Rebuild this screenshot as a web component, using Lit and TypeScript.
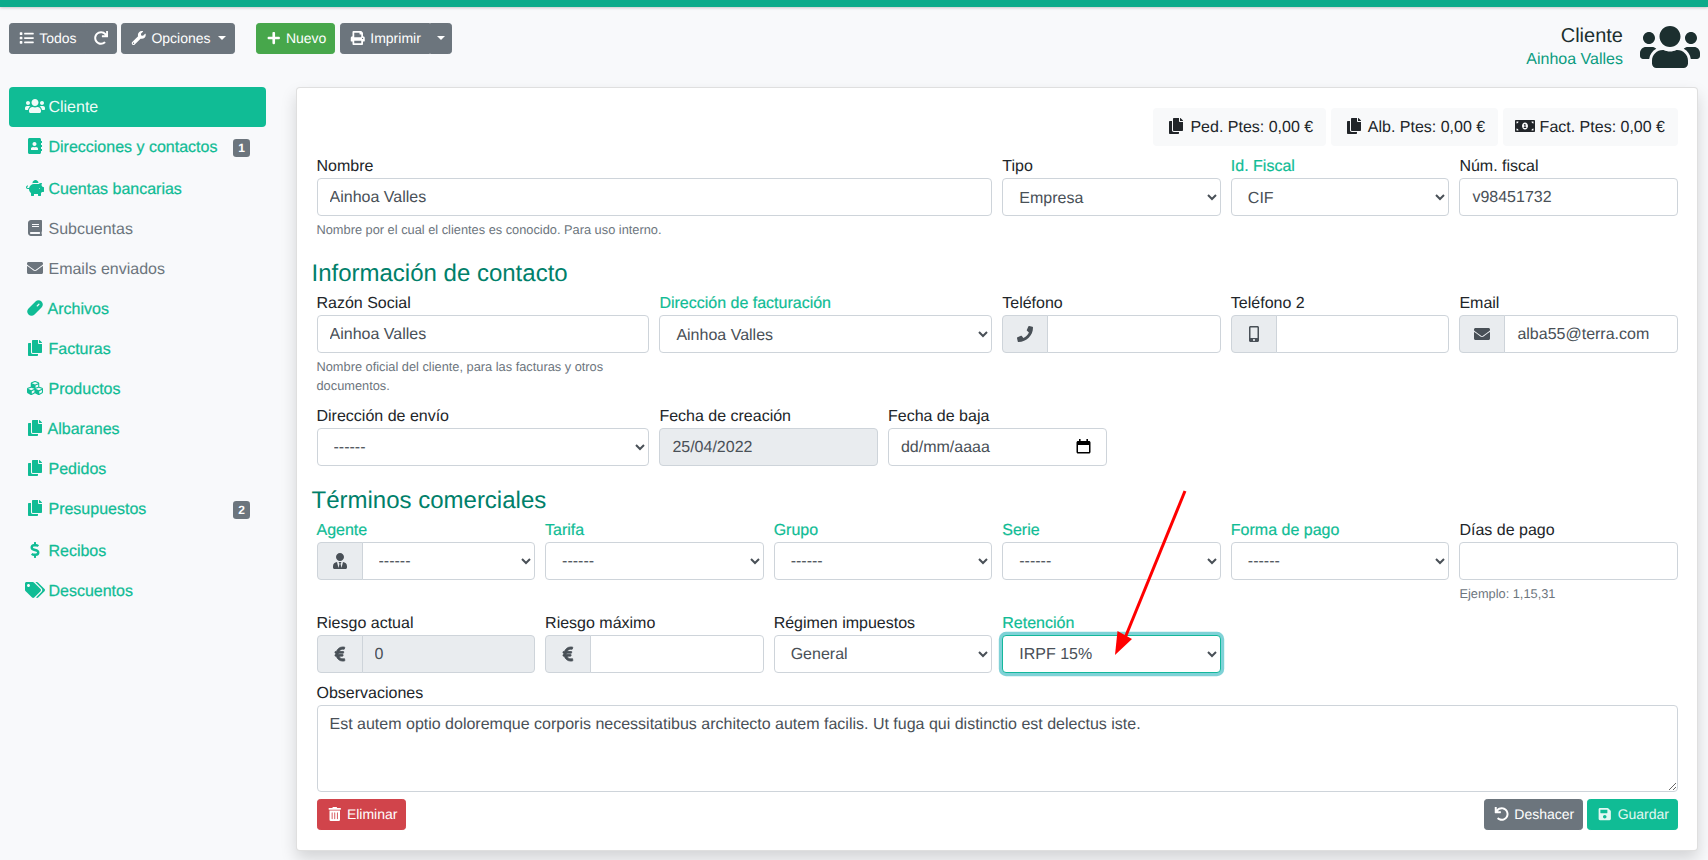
import { LitElement, html, css } from "lit";
import { customElement } from "lit/decorators.js";

// font awesome 5 solid shapes: [viewBox width, path]
const ICONS: Record<string, [number, string]> = {
  users: [640, "M96 224c35.3 0 64-28.7 64-64s-28.7-64-64-64-64 28.7-64 64 28.7 64 64 64zm448 0c35.3 0 64-28.7 64-64s-28.7-64-64-64-64 28.7-64 64 28.7 64 64 64zm32 32h-64c-17.6 0-33.5 7.1-45.1 18.6 40.3 22.1 68.9 62 75.1 109.4h66c17.7 0 32-14.3 32-32v-32c0-35.3-28.7-64-64-64zm-256 0c61.9 0 112-50.1 112-112S381.9 32 320 32 208 82.1 208 144s50.1 112 112 112zm76.8 32h-8.3c-20.8 10-43.9 16-68.5 16s-47.6-6-68.5-16h-8.3C179.6 288 128 339.6 128 403.2V432c0 26.5 21.5 48 48 48h288c26.5 0 48-21.5 48-48v-28.8c0-63.6-51.6-115.2-115.2-115.2zm-223.7-13.4C161.5 263.1 145.6 256 128 256H64c-35.3 0-64 28.7-64 64v32c0 17.7 14.3 32 32 32h65.9c6.3-47.4 34.9-87.3 75.2-109.4z"],
  list: [512, "M80 368H16a16 16 0 0 0-16 16v64a16 16 0 0 0 16 16h64a16 16 0 0 0 16-16v-64a16 16 0 0 0-16-16zm0-320H16A16 16 0 0 0 0 64v64a16 16 0 0 0 16 16h64a16 16 0 0 0 16-16V64a16 16 0 0 0-16-16zm0 160H16a16 16 0 0 0-16 16v64a16 16 0 0 0 16 16h64a16 16 0 0 0 16-16v-64a16 16 0 0 0-16-16zm416 176H176a16 16 0 0 0-16 16v32a16 16 0 0 0 16 16h320a16 16 0 0 0 16-16v-32a16 16 0 0 0-16-16zm0-320H176a16 16 0 0 0-16 16v32a16 16 0 0 0 16 16h320a16 16 0 0 0 16-16V80a16 16 0 0 0-16-16zm0 160H176a16 16 0 0 0-16 16v32a16 16 0 0 0 16 16h320a16 16 0 0 0 16-16v-32a16 16 0 0 0-16-16z"],
  redo: [512, "M500.33 0h-47.41a12 12 0 0 0-12 12.57l4 82.76A247.42 247.42 0 0 0 256 8C119.34 8 7.9 119.53 8 256.19 8.1 393.07 119.1 504 256 504a247.1 247.1 0 0 0 166.18-63.91 12 12 0 0 0 .48-17.43l-34-34a12 12 0 0 0-16.38-.55A176 176 0 1 1 402.1 157.8l-101.53-4.87a12 12 0 0 0-12.57 12v47.41a12 12 0 0 0 12 12h200.33a12 12 0 0 0 12-12V12a12 12 0 0 0-12-12z"],
  undo: [512, "M212.333 224.333H12c-6.627 0-12-5.373-12-12V12C0 5.373 5.373 0 12 0h48c6.627 0 12 5.373 12 12v78.112C117.773 39.279 184.26 7.47 258.175 8.007c136.906.994 246.448 111.623 246.157 248.532C504.041 393.258 393.12 504 256.333 504c-64.089 0-122.496-24.313-166.51-64.215-5.099-4.622-5.334-12.554-.467-17.42l33.967-33.967c4.474-4.474 11.662-4.717 16.401-.525C170.76 415.336 211.58 432 256.333 432c97.268 0 176-78.716 176-176 0-97.267-78.716-176-176-176-58.496 0-110.28 28.476-142.274 72.333h98.274c6.627 0 12 5.373 12 12v48c0 6.627-5.373 12-12 12z"],
  wrench: [512, "M507.73 109.1c-2.24-9.03-13.54-12.09-20.12-5.51l-74.36 74.36-67.88-11.31-11.31-67.88 74.36-74.36c6.62-6.62 3.43-17.9-5.66-20.16-47.38-11.74-99.55.91-136.58 37.93-39.64 39.64-50.55 97.1-34.05 147.2L18.74 402.76c-24.99 24.99-24.99 65.51 0 90.5 24.99 24.99 65.51 24.99 90.5 0l213.21-213.21c50.12 16.71 107.47 5.68 147.37-34.22 37.07-37.07 49.7-89.32 37.91-136.73zM64 472c-13.25 0-24-10.75-24-24 0-13.26 10.75-24 24-24s24 10.74 24 24c0 13.25-10.75 24-24 24z"],
  plus: [448, "M416 208H272V64c0-17.67-14.33-32-32-32h-32c-17.67 0-32 14.33-32 32v144H32c-17.67 0-32 14.33-32 32v32c0 17.67 14.33 32 32 32h144v144c0 17.67 14.33 32 32 32h32c17.67 0 32-14.33 32-32V304h144c17.67 0 32-14.33 32-32v-32c0-17.67-14.33-32-32-32z"],
  print: [512, "M448 192V77.25c0-8.49-3.37-16.62-9.37-22.63L393.37 9.37c-6-6-14.14-9.37-22.63-9.37H96C78.33 0 64 14.33 64 32v160c-35.35 0-64 28.65-64 64v112c0 8.84 7.16 16 16 16h48v96c0 17.67 14.33 32 32 32h320c17.67 0 32-14.33 32-32v-96h48c8.84 0 16-7.16 16-16V256c0-35.35-28.65-64-64-64zm-64 256H128v-96h256v96zm0-224H128V64h192v48c0 8.84 7.16 16 16 16h48v96zm48 72c-13.25 0-24-10.75-24-24 0-13.26 10.75-24 24-24s24 10.74 24 24c0 13.25-10.75 24-24 24z"],
  addressBook: [448, "M436 160c6.6 0 12-5.4 12-12v-40c0-6.6-5.4-12-12-12h-20V48c0-26.5-21.5-48-48-48H48C21.5 0 0 21.5 0 48v416c0 26.5 21.5 48 48 48h320c26.5 0 48-21.5 48-48v-48h20c6.6 0 12-5.4 12-12v-40c0-6.6-5.4-12-12-12h-20v-64h20c6.6 0 12-5.4 12-12v-40c0-6.6-5.4-12-12-12h-20v-64h20zm-228-32c35.3 0 64 28.7 64 64s-28.7 64-64 64-64-28.7-64-64 28.7-64 64-64zm112 236.8c0 10.6-10 19.2-22.4 19.2H118.4C106 384 96 375.4 96 364.8v-19.2c0-31.8 30.1-57.6 67.2-57.6h5c12.3 5.1 25.7 8 39.8 8s27.6-2.9 39.8-8h5c37.1 0 67.2 25.8 67.2 57.6v19.2z"],
  piggy: [576, "M560 224h-29.5c-8.8-20-21.6-37.7-37.4-52.5L512 96h-32c-29.4 0-55.4 13.5-73 34.3-7.6-1.1-15.1-2.3-23-2.3H256c-77.4 0-141.9 55-156.8 128H56c-14.8 0-26.5-13.5-23.5-28.8C34.7 215.8 45.4 208 57 208h1c3.3 0 6-2.7 6-6v-20c0-3.3-2.7-6-6-6-28.5 0-53.9 20.4-57.5 48.6C-3.9 258.8 22.7 288 56 288h40c0 52.2 25.4 98.1 64 127.3V496c0 8.8 7.2 16 16 16h64c8.8 0 16-7.2 16-16v-48h128v48c0 8.8 7.2 16 16 16h64c8.8 0 16-7.2 16-16v-80.7c11.8-8.9 22.3-19.4 31.3-31.3H560c8.8 0 16-7.2 16-16V240c0-8.8-7.2-16-16-16zm-128 64c-8.8 0-16-7.2-16-16s7.2-16 16-16 16 7.2 16 16-7.2 16-16 16zM256 96h128c5.4 0 10.7.4 15.9.8 0-.3.1-.5.1-.8 0-53-43-96-96-96s-96 43-96 96c0 2.1.5 4.1.6 6.2 15.2-3.9 31-6.2 47.4-6.2z"],
  book: [448, "M448 360V24c0-13.3-10.7-24-24-24H96C43 0 0 43 0 96v320c0 53 43 96 96 96h328c13.3 0 24-10.7 24-24v-16c0-7.5-3.5-14.3-8.9-18.7-4.2-15.4-4.2-59.3 0-74.7 5.4-4.3 8.9-11.1 8.9-18.6zM128 134c0-3.3 2.7-6 6-6h212c3.3 0 6 2.7 6 6v20c0 3.3-2.7 6-6 6H134c-3.3 0-6-2.7-6-6v-20zm0 64c0-3.3 2.7-6 6-6h212c3.3 0 6 2.7 6 6v20c0 3.3-2.7 6-6 6H134c-3.3 0-6-2.7-6-6v-20zm253.4 250H96c-17.7 0-32-14.3-32-32 0-17.6 14.4-32 32-32h285.4c-1.9 17.1-1.9 46.9 0 64z"],
  envelope: [512, "M502.3 190.8c3.9-3.1 9.7-.2 9.7 4.7V400c0 26.5-21.5 48-48 48H48c-26.5 0-48-21.5-48-48V195.6c0-5 5.7-7.8 9.7-4.7 22.4 17.4 52.1 39.5 154.1 113.6 21.1 15.4 56.7 47.8 92.2 47.6 35.7.3 72-32.8 92.3-47.6 102-74.1 131.6-96.3 154-113.7zM256 320c23.2.4 56.6-29.2 73.4-41.4 132.7-96.3 142.8-104.7 173.4-128.7 5.8-4.5 9.2-11.5 9.2-18.9v-19c0-26.5-21.5-48-48-48H48C21.5 64 0 85.5 0 112v19c0 7.4 3.4 14.3 9.2 18.9 30.6 23.9 40.7 32.4 173.4 128.7 16.8 12.2 50.2 41.8 73.4 41.4z"],
  capsule: [512, "M48 464c-56-56-56-136 0-192L272 48c56-56 136-56 192 0s56 136 0 192L240 464c-56 56-136 56-192 0zM312 176a20 20 0 0 0 28 28l56-56a20 20 0 0 0-28-28z"],
  copy: [448, "M320 448v40c0 13.255-10.745 24-24 24H24c-13.255 0-24-10.745-24-24V120c0-13.255 10.745-24 24-24h72v296c0 30.879 25.121 56 56 56h168zm0-344V0H152c-13.255 0-24 10.745-24 24v368c0 13.255 10.745 24 24 24h272c13.255 0 24-10.745 24-24V128H344c-13.2 0-24-10.8-24-24zm120.971-31.029L375.029 7.029A24 24 0 0 0 358.059 0H352v96h96v-6.059a24 24 0 0 0-7.029-16.97z"],
  cubes: [512, "M488.6 250.2L392 214V105.5c0-15-9.3-28.4-23.4-33.7l-100-37.5c-8.1-3.1-17.1-3.1-25.3 0l-100 37.5c-14.1 5.3-23.4 18.7-23.4 33.7V214l-96.6 36.2C9.3 255.5 0 268.9 0 283.9V394c0 13.6 7.7 26.1 19.9 32.2l100 50c10.1 5.1 22.1 5.1 32.2 0l103.9-52 103.9 52c10.1 5.1 22.1 5.1 32.2 0l100-50c12.2-6.1 19.9-18.6 19.9-32.2V283.9c0-15-9.3-28.4-23.4-33.7zM358 214.8l-85 31.9v-68.2l85-37v73.3zM154 104.1l102-38.2 102 38.2v.6l-102 41.4-102-41.4v-.6zm84 291.1l-85 42.5v-79.1l85-38.8v75.4zm0-112l-102 41.4-102-41.4v-.6l102-38.2 102 38.2v.6zm240 112l-85 42.5v-79.1l85-38.8v75.4zm0-112l-102 41.4-102-41.4v-.6l102-38.2 102 38.2v.6z"],
  dollar: [288, "M209.2 233.4l-108-31.6C88.7 198.2 80 186.5 80 173.5c0-16.3 13.2-29.5 29.5-29.5h66.3c12.2 0 24.2 3.7 34.2 10.5 6.1 4.1 14.3 3.1 19.5-2l34.8-34c7.1-6.9 6.1-18.4-1.8-24.5C238 74.8 207.4 64.1 176 64V16c0-8.8-7.2-16-16-16h-32c-8.8 0-16 7.2-16 16v48h-2.5C45.8 64-5.4 118.7.5 183.6c4.2 46.1 39.4 83.6 83.8 96.6l102.5 30c12.5 3.7 21.2 15.3 21.2 28.3 0 16.3-13.2 29.5-29.5 29.5h-66.3C100 368 88 364.3 78 357.5c-6.1-4.1-14.3-3.1-19.5 2l-34.8 34c-7.1 6.9-6.1 18.4 1.8 24.5 24.5 19.2 55.1 29.9 86.5 30v48c0 8.8 7.2 16 16 16h32c8.8 0 16-7.2 16-16v-48.2c46.6-.9 90.3-28.6 105.7-72.7 21.5-61.6-14.6-124.8-72.5-141.7z"],
  tags: [640, "M497.941 225.941L286.059 14.059A48 48 0 0 0 252.118 0H48C21.49 0 0 21.49 0 48v204.118a48 48 0 0 0 14.059 33.941l211.882 211.882c18.744 18.745 49.136 18.746 67.882 0l204.118-204.118c18.745-18.745 18.745-49.136 0-67.882zM112 160c-26.51 0-48-21.49-48-48s21.49-48 48-48 48 21.49 48 48-21.49 48-48 48zm513.941 133.823L421.823 497.941c-18.745 18.745-49.137 18.745-67.882 0l-.36-.36L527.64 323.522c16.999-16.999 26.36-39.6 26.36-63.64s-9.362-46.641-26.36-63.64L331.397 0h48.721a48 48 0 0 1 33.941 14.059l211.882 211.882c18.745 18.745 18.745 49.137 0 67.882z"],
  phone: [512, "M493.4 24.6l-104-24c-11.3-2.6-22.9 3.3-27.5 13.9l-48 112c-4.2 9.8-1.4 21.3 6.9 28l60.6 49.6c-36 76.7-98.9 140.5-177.2 177.2l-49.6-60.6c-6.8-8.3-18.2-11.1-28-6.9l-112 48C3.9 366.5-2 378.1.6 389.4l24 104C27.1 504.2 36.7 512 48 512c256.1 0 464-207.5 464-464 0-11.2-7.7-20.9-18.6-23.4z"],
  mobile: [320, "M272 0H48C21.5 0 0 21.5 0 48v416c0 26.5 21.5 48 48 48h224c26.5 0 48-21.5 48-48V48c0-26.5-21.5-48-48-48zM160 480c-17.7 0-32-14.3-32-32s14.3-32 32-32 32 14.3 32 32-14.3 32-32 32zm112-108c0 6.6-5.4 12-12 12H60c-6.6 0-12-5.4-12-12V60c0-6.6 5.4-12 12-12h200c6.6 0 12 5.4 12 12v312z"],
  userTie: [448, "M224 256c70.7 0 128-57.3 128-128S294.7 0 224 0 96 57.3 96 128s57.3 128 128 128zm95.8 32.6L272 480l-32-136 32-56h-96l32 56-32 136-47.8-191.4C56.9 292 0 350.3 0 422.4V464c0 26.5 21.5 48 48 48h352c26.5 0 48-21.5 48-48v-41.6c0-72.1-56.9-130.4-128.2-133.8z"],
  euro: [320, "M310.706 413.765c-1.314-6.63-7.835-10.872-14.424-9.369-10.692 2.439-27.422 5.413-45.426 5.413-56.763 0-101.929-34.79-121.461-85.449h113.689a12 12 0 0 0 11.708-9.369l6.373-28.36c1.686-7.502-4.019-14.631-11.708-14.631H115.22c-1.21-14.328-1.414-28.287.137-42.245H261.95a12 12 0 0 0 11.723-9.434l6.512-29.755c1.638-7.484-4.061-14.566-11.723-14.566H130.184c20.633-44.991 62.69-75.03 117.619-75.03 14.486 0 28.564 2.145 37.851 4.043 6.216 1.27 12.347-2.572 13.908-8.721l11.981-47.24c1.752-6.902-2.732-13.795-9.731-15.079C290.693 33.409 270.652 31 249.836 31 152.471 31 74.124 91.7 45.773 177h-33.774c-6.627 0-12 5.373-12 12v29.755c0 6.627 5.373 12 12 12h21.585c-1 13.65-1.12 29.842-.114 42.245H12c-6.627 0-12 5.373-12 12v28.36c0 6.627 5.373 12 12 12h30.591c26.002 89.642 105.742 157.5 207.409 157.5 24.536 0 45.286-4.257 56.37-7.042 6.222-1.564 10.15-7.827 8.876-14.12l-4.54-18.933z"],
  trash: [448, "M32 464a48 48 0 0 0 48 48h288a48 48 0 0 0 48-48V128H32zm272-256a16 16 0 0 1 32 0v224a16 16 0 0 1-32 0zm-96 0a16 16 0 0 1 32 0v224a16 16 0 0 1-32 0zm-96 0a16 16 0 0 1 32 0v224a16 16 0 0 1-32 0zM432 32H312l-9.4-18.7A24 24 0 0 0 281.1 0H166.8a23.72 23.72 0 0 0-21.4 13.3L136 32H16A16 16 0 0 0 0 48v32a16 16 0 0 0 16 16h416a16 16 0 0 0 16-16V48a16 16 0 0 0-16-16z"],
  save: [448, "M433.941 129.941l-83.882-83.882A48 48 0 0 0 316.118 32H48C21.49 32 0 53.49 0 80v352c0 26.51 21.49 48 48 48h352c26.51 0 48-21.49 48-48V163.882a48 48 0 0 0-14.059-33.941zM224 416c-35.346 0-64-28.654-64-64 0-35.346 28.654-64 64-64s64 28.654 64 64c0 35.346-28.654 64-64 64zm96-304.52V212c0 6.627-5.373 12-12 12H76c-6.627 0-12-5.373-12-12V108c0-6.627 5.373-12 12-12h228.52c3.183 0 6.235 1.264 8.485 3.515l3.48 3.48A11.996 11.996 0 0 1 320 111.48z"],
  money: [640, "M352 288h-16v-88c0-4.42-3.58-8-8-8h-13.58c-4.74 0-9.37 1.4-13.31 4.03l-15.33 10.22a7.978 7.978 0 0 0-2.22 11.09l8.88 13.31c2.45 3.68 7.41 4.67 11.09 2.22l.47-.31V288h-16c-4.42 0-8 3.58-8 8v16c0 4.42 3.58 8 8 8h64c4.42 0 8-3.58 8-8v-16c0-4.42-3.58-8-8-8zM608 64H32C14.33 64 0 78.33 0 96v320c0 17.67 14.33 32 32 32h576c17.67 0 32-14.33 32-32V96c0-17.67-14.33-32-32-32zM48 400v-64c35.35 0 64 28.65 64 64H48zm0-224v-64h64c0 35.35-28.65 64-64 64zm272 192c-53.02 0-96-50.15-96-112 0-61.86 42.98-112 96-112s96 50.14 96 112c0 61.83-42.98 112-96 112zm272 32h-64c0-35.35 28.65-64 64-64v64zm0-224c-35.35 0-64-28.65-64-64h64v64z"],
};

const fa = (name: string) => {
  const [w, d] = ICONS[name];
  return html`<svg class="fa ${name}" viewBox="0 0 ${w} 512"><path fill="currentColor" fill-rule="evenodd" d=${d}></path></svg>`;
};

const MENU = [
  { icon: "addressBook", text: "Direcciones y contactos", badge: "1" },
  { icon: "piggy", text: "Cuentas bancarias" },
  { icon: "book", text: "Subcuentas", muted: true },
  { icon: "envelope", text: "Emails enviados", muted: true },
  { icon: "capsule", text: "Archivos" },
  { icon: "copy", text: "Facturas" },
  { icon: "cubes", text: "Productos" },
  { icon: "copy", text: "Albaranes" },
  { icon: "copy", text: "Pedidos" },
  { icon: "copy", text: "Presupuestos", badge: "2" },
  { icon: "dollar", text: "Recibos" },
  { icon: "tags", text: "Descuentos" },
];

@customElement("app-root")
export class AppRoot extends LitElement {
  static styles = css`
    :host {
      display: block;
      position: relative;
      min-height: 100vh;
      background: #f8f9fb;
      font-family: "Liberation Sans", Arial, sans-serif;
      font-size: 16px;
      line-height: 24px;
      color: #212529;
      text-rendering: geometricPrecision;
    }
    * {
      box-sizing: border-box;
    }
    .fa {
      display: inline-block;
      width: 1.25em;
      height: 1em;
      vertical-align: -0.125em;
    }
    .euro path {
      stroke: currentColor;
      stroke-width: 26;
    }
    .topbar {
      height: 7px;
      background: #0cab8b;
      box-shadow: 0 1px 3px rgba(0, 0, 0, 0.2);
    }
    .page {
      padding: 16px 8px 0 9px;
    }
    .header {
      display: flex;
      justify-content: space-between;
      align-items: flex-start;
      margin-bottom: 15px;
    }
    .toolbar {
      display: flex;
    }
    .group {
      display: flex;
      margin-right: 4.5px;
    }
    .group.wide {
      margin-right: 20.5px;
    }
    .btn {
      display: inline-block;
      height: 31px;
      padding: 3px 8px;
      border: 1px solid #6c757d;
      border-radius: 3.2px;
      background: #6c757d;
      color: #fff;
      font-size: 14px;
      line-height: 23px;
      white-space: nowrap;
    }
    .group .btn:not(:last-child) {
      border-top-right-radius: 0;
      border-bottom-right-radius: 0;
    }
    .group .btn:not(:first-child) {
      border-top-left-radius: 0;
      border-bottom-left-radius: 0;
    }
    .group .btn.flush {
      margin-right: -1px;
    }
    .btn.green {
      background: #47a74b;
      border-color: #47a74b;
    }
    .btn.red {
      background: #d1444b;
      border-color: #d1444b;
    }
    .btn.teal {
      background: #10bc95;
      border-color: #10bc95;
      color: #e4f8f3;
    }
    .btn .plain {
      width: 14px;
      vertical-align: -2px;
    }
    .caret {
      display: inline-block;
      margin-left: 3.6px;
      vertical-align: 3px;
      border-top: 4.2px solid #fff;
      border-left: 4.2px solid transparent;
      border-right: 4.2px solid transparent;
    }
    .split {
      padding: 3px 6px;
    }
    .split .caret {
      margin-left: 0;
    }
    .who {
      display: flex;
      color: #1c2f2f;
    }
    .who-text {
      padding-top: 1px;
      text-align: right;
    }
    .who-title {
      font-size: 20px;
    }
    .who-name {
      color: #0b9c80;
    }
    .who .fa {
      width: 60px;
      height: 48px;
      margin-left: 17px;
      display: block;
    }
    .main {
      display: flex;
      gap: 30px;
      align-items: flex-start;
    }
    .side {
      flex: 0 0 257px;
    }
    .item {
      display: flex;
      justify-content: space-between;
      align-items: flex-start;
      height: 40px;
      padding: 8.5px 16px;
      color: #10bc95;
      border-radius: 4px;
      -webkit-text-stroke: 0.25px #10bc95;
    }
    .item .fa {
      margin-right: -1px;
    }
    .item.active {
      background: #10bc95;
      color: #eefbf8;
      -webkit-text-stroke: 0;
    }
    .item.muted {
      color: #6c757d;
      -webkit-text-stroke: 0;
    }
    .item.tall {
      height: 42px;
    }
    .badge {
      margin-top: 3.5px;
      padding: 0 5.2px;
      height: 18px;
      border-radius: 3.2px;
      background: #6c757d;
      color: #fff;
      font-size: 12px;
      font-weight: 700;
      line-height: 18px;
      -webkit-text-stroke: 0;
    }
    .card {
      flex: 1;
      margin-right: 2px;
      padding: 20px 14px 20px 14.500px;
      background: #fff;
      border: 1px solid rgba(0, 0, 0, 0.125);
      border-radius: 4px;
      box-shadow: 0 8px 16px rgba(0, 0, 0, 0.15);
    }
    .pills {
      display: flex;
      justify-content: flex-end;
      gap: 5px;
      padding: 0 5px;
      margin-bottom: 7px;
    }
    .pill {
      height: 38px;
      padding: 8px 13px;
      background: #f8f9fa;
      border-radius: 4px;
      white-space: nowrap;
    }
    .pill.money {
      padding-left: 12px;
    }
    .row {
      display: grid;
      grid-template-columns: repeat(12, 1fr);
      column-gap: 10px;
      padding: 0 5px;
    }
    .span-2 {
      grid-column: span 2;
    }
    .span-3 {
      grid-column: span 3;
    }
    .span-6 {
      grid-column: span 6;
    }
    .span-12 {
      grid-column: span 12;
    }
    .field {
      margin-bottom: 7px;
      min-width: 0;
    }
    .field label {
      display: block;
      height: 25px;
      padding-top: 2px;
    }
    .field label.green {
      color: #10bc95;
      -webkit-text-stroke: 0.2px #10bc95;
    }
    .control {
      display: block;
      width: 100%;
      height: 38px;
      padding: 7px 12px 5px;
      border: 1px solid #ced4da;
      border-radius: 4px;
      background: #fff;
      color: #495057;
      font-family: inherit;
      font-size: 16px;
      line-height: 24px;
      outline: none;
      text-rendering: geometricPrecision;
    }
    .control.readonly {
      background: #e9ecef;
    }
    .control.focus {
      border-color: #14b89c;
      box-shadow: 0 0 0 3.2px rgba(0, 165, 175, 0.5);
    }
    .control.date {
      display: flex;
      justify-content: space-between;
      align-items: center;
      padding-right: 15px;
    }
    .control.date svg {
      margin-top: -2px;
    }
    textarea.control {
      height: 87px;
      resize: vertical;
    }
    .input-group {
      display: flex;
    }
    .input-group .control {
      flex: 1;
      min-width: 0;
      border-top-left-radius: 0;
      border-bottom-left-radius: 0;
      margin-left: -1px;
    }
    .addon {
      flex: 0 0 46px;
      display: flex;
      align-items: center;
      justify-content: center;
      height: 38px;
      border: 1px solid #ced4da;
      border-radius: 4px 0 0 4px;
      background: #e9ecef;
      color: #495057;
    }
    .help {
      margin-top: 4px;
      font-size: 12.8px;
      line-height: 19.2px;
      color: #6c757d;
    }
    h2 {
      margin: 13px 0 2px;
      font-size: 24px;
      font-weight: 400;
      line-height: 29px;
      color: #00806a;
    }
    .actions {
      display: flex;
      justify-content: space-between;
      padding: 0 5px;
    }
    .actions-right {
      display: flex;
      gap: 4px;
    }
    .arrow {
      position: absolute;
      left: 1100px;
      top: 480px;
      width: 100px;
      height: 190px;
      pointer-events: none;
    }
  `;

  field(cls: string, text: string, control: unknown, green = false, help = "") {
    return html`<div class="field ${cls}">
      <label class=${green ? "green" : ""}>${text}</label>
      ${control}
      ${help ? html`<div class="help">${help}</div>` : ""}
    </div>`;
  }

  input(value = "", readonly = false) {
    return html`<input class="control ${readonly ? "readonly" : ""}" type="text" .value=${value} ?readonly=${readonly} />`;
  }

  select(value: string, focus = false) {
    return html`<select class="control ${focus ? "focus" : ""}"><option>${value}</option></select>`;
  }

  addon(icon: string, control: unknown) {
    return html`<div class="input-group"><div class="addon">${fa(icon)}</div>${control}</div>`;
  }

  renderHeader() {
    return html`<div class="header">
      <div class="toolbar">
        <div class="group">
          <span class="btn flush">${fa("list")} Todos</span>
          <span class="btn"><svg class="fa plain" viewBox="0 0 512 512"><path fill="currentColor" d=${ICONS.redo[1]}></path></svg></span>
        </div>
        <div class="group wide">
          <span class="btn">${fa("wrench")} Opciones <i class="caret"></i></span>
        </div>
        <div class="group">
          <span class="btn green">${fa("plus")} Nuevo</span>
        </div>
        <div class="group">
          <span class="btn">${fa("print")} Imprimir</span>
          <span class="btn split"><i class="caret"></i></span>
        </div>
      </div>
      <div class="who">
        <div class="who-text">
          <div class="who-title">Cliente</div>
          <div class="who-name">Ainhoa Valles</div>
        </div>
        ${fa("users")}
      </div>
    </div>`;
  }

  renderSide() {
    return html`<nav class="side">
      <div class="item active"><span>${fa("users")} Cliente</span></div>
      ${MENU.map(
        (m) => html`<div class="item ${m.muted ? "muted" : ""} ${m.badge ? "tall" : ""}">
          <span>${fa(m.icon)} ${m.text}</span>
          ${m.badge ? html`<span class="badge">${m.badge}</span>` : ""}
        </div>`
      )}
    </nav>`;
  }

  renderForm() {
    return html`<section class="card">
      <div class="pills">
        <div class="pill">${fa("copy")} Ped. Ptes: 0,00 €</div>
        <div class="pill">${fa("copy")} Alb. Ptes: 0,00 €</div>
        <div class="pill money">${fa("money")} Fact. Ptes: 0,00 €</div>
      </div>
      <div class="row">
        ${this.field("span-6", "Nombre", this.input("Ainhoa Valles"), false, "Nombre por el cual el clientes es conocido. Para uso interno.")}
        ${this.field("span-2", "Tipo", this.select("Empresa"))}
        ${this.field("span-2", "Id. Fiscal", this.select("CIF"), true)}
        ${this.field("span-2", "Núm. fiscal", this.input("v98451732"))}
      </div>
      <h2>Información de contacto</h2>
      <div class="row">
        ${this.field("span-3", "Razón Social", this.input("Ainhoa Valles"), false, "Nombre oficial del cliente, para las facturas y otros documentos.")}
        ${this.field("span-3", "Dirección de facturación", this.select("Ainhoa Valles"), true)}
        ${this.field("span-2", "Teléfono", this.addon("phone", this.input()))}
        ${this.field("span-2", "Teléfono 2", this.addon("mobile", this.input()))}
        ${this.field("span-2", "Email", this.addon("envelope", this.input("alba55@terra.com")))}
      </div>
      <div class="row">
        ${this.field("span-3", "Dirección de envío", this.select("------"))}
        ${this.field("span-2", "Fecha de creación", this.input("25/04/2022", true))}
        ${this.field(
          "span-2",
          "Fecha de baja",
          html`<div class="control date">
            <span>dd/mm/aaaa</span>
            <svg width="15" height="15" viewBox="0 0 15 15">
              <path fill="#000" d="M3 0h1.6v2h5.8V0H12v2h1c.8 0 1.5.7 1.5 1.5V13c0 .8-.7 1.5-1.5 1.5H2c-.8 0-1.5-.7-1.5-1.5V3.500C.5 2.700 1.200 2 2 2h1zM2 6v7h11V6z"></path>
            </svg>
          </div>`
        )}
      </div>
      <h2>Términos comerciales</h2>
      <div class="row">
        ${this.field("span-2", "Agente", this.addon("userTie", this.select("------")), true)}
        ${this.field("span-2", "Tarifa", this.select("------"), true)}
        ${this.field("span-2", "Grupo", this.select("------"), true)}
        ${this.field("span-2", "Serie", this.select("------"), true)}
        ${this.field("span-2", "Forma de pago", this.select("------"), true)}
        ${this.field("span-2", "Días de pago", this.input(), false, "Ejemplo: 1,15,31")}
      </div>
      <div class="row">
        ${this.field("span-2", "Riesgo actual", this.addon("euro", this.input("0", true)))}
        ${this.field("span-2", "Riesgo máximo", this.addon("euro", this.input()))}
        ${this.field("span-2", "Régimen impuestos", this.select("General"))}
        ${this.field("span-2", "Retención", this.select("IRPF 15%", true), true)}
      </div>
      <div class="row">
        ${this.field(
          "span-12",
          "Observaciones",
          html`<textarea class="control" .value=${"Est autem optio doloremque corporis necessitatibus architecto autem facilis. Ut fuga qui distinctio est delectus iste."}></textarea>`
        )}
      </div>
      <div class="actions">
        <span class="btn red">${fa("trash")} Eliminar</span>
        <div class="actions-right">
          <span class="btn">${fa("undo")} Deshacer</span>
          <span class="btn teal">${fa("save")} Guardar</span>
        </div>
      </div>
    </section>`;
  }

  render() {
    return html`
      <div class="topbar"></div>
      <div class="page">
        ${this.renderHeader()}
        <div class="main">${this.renderSide()} ${this.renderForm()}</div>
      </div>
      <svg class="arrow" viewBox="0 0 100 190">
        <path d="M85 11 L25 158" stroke="#f00" stroke-width="3" fill="none"></path>
        <path d="M15 175 L17.500 151 L32 159 Z" fill="#f00"></path>
      </svg>
    `;
  }
}
